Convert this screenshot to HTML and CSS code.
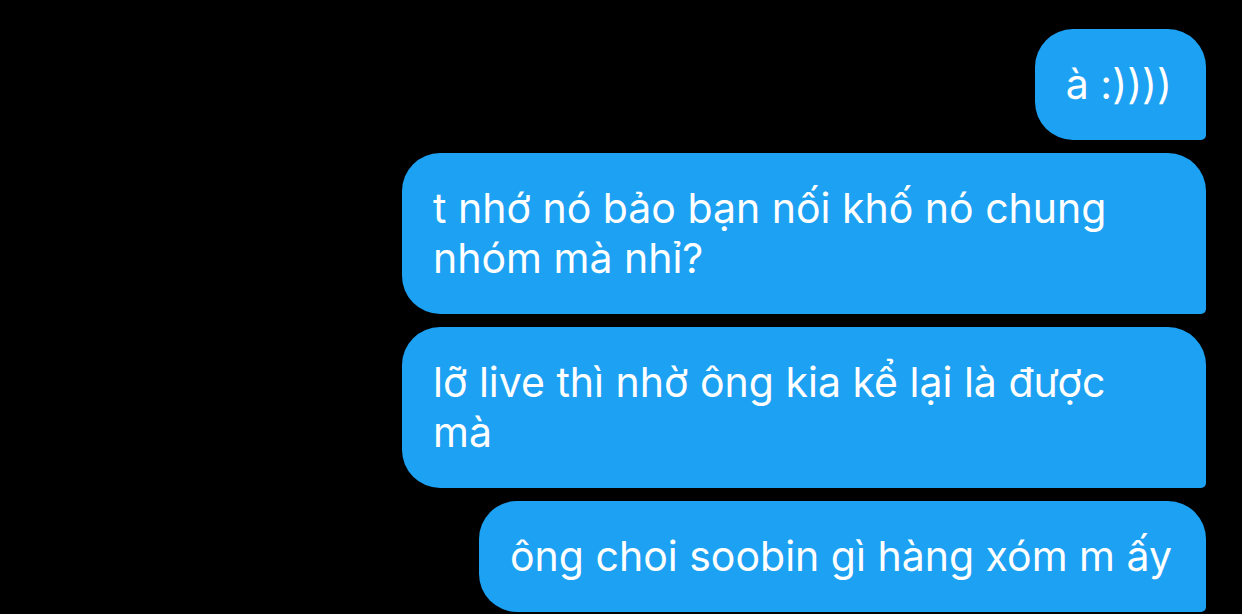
FILE: index.html
```html
<!DOCTYPE html>
<html lang="vi">
<head>
<meta charset="utf-8">
<link rel="stylesheet" href="styles.css">
</head>
<body>
<div class="chat">
  <div class="bubble">à :))))</div>
  <div class="bubble">t nhớ nó bảo bạn nối khố nó chung nhóm mà nhỉ?</div>
  <div class="bubble">lỡ live thì nhờ ông kia kể lại là được mà</div>
  <div class="bubble">ông choi soobin gì hàng xóm m ấy</div>
</div>
</body>
</html>
```
FILE: styles.css
```css
html, body {
  margin: 0;
  padding: 0;
  background: #000;
  height: 100%;
  overflow: hidden;
}
.chat {
  display: flex;
  flex-direction: column;
  align-items: flex-end;
  gap: 13px;
  padding: 29px 36px 0 0;
}
.bubble {
  box-sizing: border-box;
  max-width: 804px;
  background: #1da1f2;
  color: #fff;
  font-family: Inter, "Noto Sans", sans-serif;
  font-size: 41px;
  line-height: 50px;
  padding: 30px 34px 31px 31px;
  border-radius: 38px 38px 5px 38px;
}
```
